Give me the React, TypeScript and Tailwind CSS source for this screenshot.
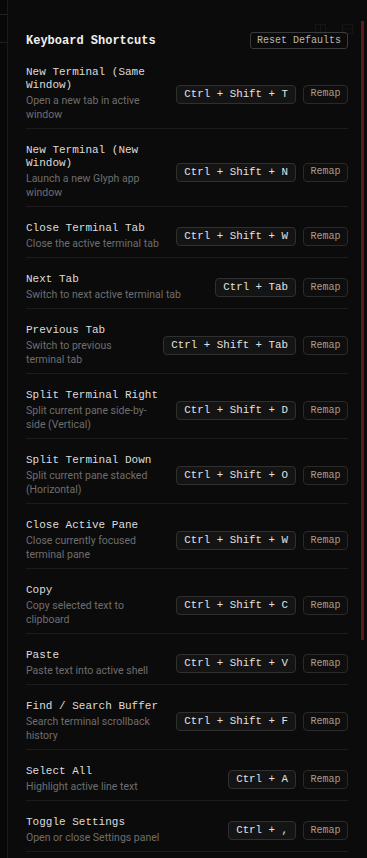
const shortcuts = [
  { title: 'New Terminal (Same Window)', desc: 'Open a new tab in active window', keys: 'Ctrl + Shift + T' },
  { title: 'New Terminal (New Window)', desc: 'Launch a new Glyph app window', keys: 'Ctrl + Shift + N' },
  { title: 'Close Terminal Tab', desc: 'Close the active terminal tab', keys: 'Ctrl + Shift + W' },
  { title: 'Next Tab', desc: 'Switch to next active terminal tab', keys: 'Ctrl + Tab' },
  { title: 'Previous Tab', desc: 'Switch to previous terminal tab', keys: 'Ctrl + Shift + Tab' },
  { title: 'Split Terminal Right', desc: 'Split current pane side-by-side (Vertical)', keys: 'Ctrl + Shift + D' },
  { title: 'Split Terminal Down', desc: 'Split current pane stacked (Horizontal)', keys: 'Ctrl + Shift + O' },
  { title: 'Close Active Pane', desc: 'Close currently focused terminal pane', keys: 'Ctrl + Shift + W' },
  { title: 'Copy', desc: 'Copy selected text to clipboard', keys: 'Ctrl + Shift + C' },
  { title: 'Paste', desc: 'Paste text into active shell', keys: 'Ctrl + Shift + V' },
  { title: 'Find / Search Buffer', desc: 'Search terminal scrollback history', keys: 'Ctrl + Shift + F' },
  { title: 'Select All', desc: 'Highlight active line text', keys: 'Ctrl + A' },
  { title: 'Toggle Settings', desc: 'Open or close Settings panel', keys: 'Ctrl + ,' },
];

const mono = "font-['Liberation_Mono',monospace]";
const sans = "font-['Roboto',sans-serif]";

export default function App() {
  return (
    <div className="h-[858px] w-[367px] overflow-hidden bg-[#080808] flex">
      {/* Sidebar edge behind the overlay */}
      <div className="w-[8px] shrink-0 border-r border-[#1a1a1a] flex flex-col">
        <div className="h-[15px] border-b border-[#222]" />
        <div className="h-[28px] border-b border-[#1e1e1e]" />
      </div>

      {/* Settings panel */}
      <div className="relative flex-1 flex bg-[#0b0b0b]">
        {/* faint layout icons showing through */}
        <div className="absolute top-[24px] right-[14px] flex gap-[16px] opacity-60">
          <svg width="11" height="10" viewBox="0 0 11 10" fill="none" stroke="#1c1c1c">
            <rect x="0.5" y="0.5" width="10" height="9" />
            <line x1="5.5" y1="0.5" x2="5.5" y2="9.5" />
          </svg>
          <svg width="11" height="10" viewBox="0 0 11 10" fill="none" stroke="#1c1c1c">
            <rect x="0.5" y="0.5" width="10" height="9" />
            <line x1="0.5" y1="5" x2="10.5" y2="5" />
          </svg>
        </div>

        <div className="relative flex-1 pl-[18px] pr-[13px] pt-[32px]">
          {/* Header */}
          <div className="h-[17px] flex items-center justify-between">
            <h1 className={`${mono} text-[12px] font-bold text-[#f0f0f0]`}>Keyboard Shortcuts</h1>
            <button className={`${mono} h-[17px] px-[6px] text-[10px] leading-none text-[#b8b8b8] border border-[#3a3a3a] rounded-[3px]`}>
              Reset Defaults
            </button>
          </div>

          {/* Rows */}
          <div className="mt-[2px]">
            {shortcuts.map(s => (
              <div key={s.title} className="flex items-center gap-[12px] pt-[15px] pb-[6px] border-b border-[#1c1c1c]">
                <div className="flex-1 min-w-0">
                  <div className={`${mono} text-[11px] leading-[13px] text-[#dcdcdc]`}>{s.title}</div>
                  <div className={`${sans} mt-[2px] text-[10.5px] leading-[14px] text-[#6e6e6e]`}>{s.desc}</div>
                </div>
                <div className="flex items-center gap-[7px] shrink-0">
                  <span className={`${mono} h-[19px] flex items-center px-[7px] text-[10.8px] whitespace-pre text-[#e2e2e2] bg-[#141414] border border-[#303030] rounded-[4px]`}>
                    {s.keys}
                  </span>
                  <button className={`${mono} h-[19px] w-[45px] flex items-center justify-center text-[10px] leading-none text-[#ad9d82] bg-[#0e0e0e] border border-[#2a2a2a] rounded-[4px]`}>
                    Remap
                  </button>
                </div>
              </div>
            ))}
          </div>
        </div>

        {/* Scrollbar */}
        <div className="w-[6px] shrink-0">
          <div className="mt-[21px] w-[3px] h-[619px] bg-[#5e1b1b]" />
        </div>
      </div>
    </div>
  );
}
